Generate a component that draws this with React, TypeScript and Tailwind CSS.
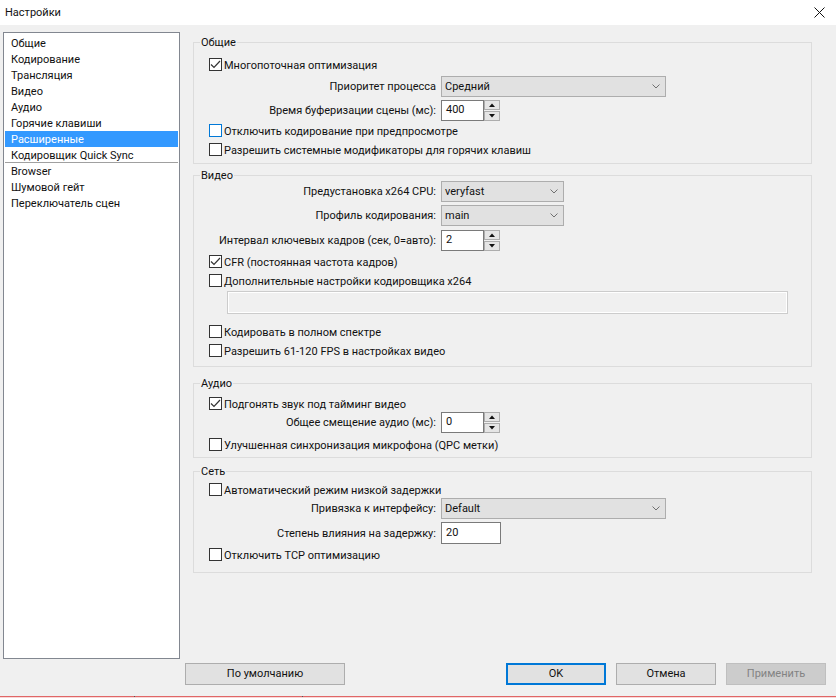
import React from "react";

const font = { fontFamily: 'Roboto, "Noto Sans", "Liberation Sans", sans-serif' };

function Box({ checked, hover }: { checked?: boolean; hover?: boolean }) {
  return (
    <span
      className={`w-[13px] h-[13px] shrink-0 bg-white border flex items-center justify-center ${
        hover ? "border-[#0078d7]" : "border-[#333333]"
      }`}
    >
      {checked && (
        <svg width="11" height="11" viewBox="0 0 11 11">
          <polyline points="1,5.5 4,8.5 10,2" fill="none" stroke="#333" strokeWidth="1.2" />
        </svg>
      )}
    </span>
  );
}

function Check({ label, checked, hover, h = "h-[19px]", mt = "" }: { label: string; checked?: boolean; hover?: boolean; h?: string; mt?: string }) {
  return (
    <div className={`flex items-center pl-[15px] ${h} ${mt}`}>
      <Box checked={checked} hover={hover} />
      <span className="ml-[2px] pt-[2px] leading-none">{label}</span>
    </div>
  );
}

function Row({ label, children, h = "h-[21px]", mt = "" }: { label: string; children: React.ReactNode; h?: string; mt?: string }) {
  return (
    <div className={`flex items-center ${h} ${mt}`}>
      <div className="w-[247px] text-right pr-[5px] pt-[2px]">{label}</div>
      {children}
    </div>
  );
}

function Combo({ value, w }: { value: string; w: string }) {
  return (
    <div className={`${w} h-full bg-[#e1e1e1] border border-[#adadad] flex items-center justify-between pl-[3px] pr-[5px]`}>
      <span className="pt-[1px]">{value}</span>
      <svg width="8" height="5" viewBox="0 0 8 5">
        <polyline points="0.5,0.5 4,4 7.5,0.5" fill="none" stroke="#707070" strokeWidth="1" />
      </svg>
    </div>
  );
}

function Spin({ value }: { value: string }) {
  return (
    <div className="flex h-full">
      <div className="w-[43px] h-full bg-white border border-[#7a7a7a] pl-[4px] leading-[17px]">{value}</div>
      <div className="w-[16px] h-full flex flex-col gap-[1px]">
        {[0, 1].map((i) => (
          <div key={i} className="flex-1 bg-[#e5e5e5] border border-[#adadad] flex items-center justify-center">
            <svg width="6" height="4" viewBox="0 0 6 4">
              <polygon points={i === 0 ? "0,4 3,0.5 6,4" : "0,0 3,3.5 6,0"} fill="#111" />
            </svg>
          </div>
        ))}
      </div>
    </div>
  );
}

function Group({ title, h, mt, children }: { title: string; h: string; mt: string; children: React.ReactNode }) {
  return (
    <div className={`relative ml-[8px] w-[619px] border border-[#dcdcdc] ${h} ${mt}`}>
      <span className="absolute top-[-8px] left-[6px] px-[1px] leading-[16px] bg-[#f0f0f0]">{title}</span>
      {children}
    </div>
  );
}

function Btn({ label, kind }: { label: string; kind?: "default" | "disabled" }) {
  const cls =
    kind === "default"
      ? "border-2 border-[#0078d7] bg-[#e1e1e1]"
      : kind === "disabled"
      ? "border border-[#bfbfbf] bg-[#cccccc] text-[#838383]"
      : "border border-[#adadad] bg-[#e1e1e1]";
  return <div className={`h-[22px] flex items-center justify-center pt-[1px] ${cls}`}>{label}</div>;
}

const items = [
  "Общие",
  "Кодирование",
  "Трансляция",
  "Видео",
  "Аудио",
  "Горячие клавиши",
  "Расширенные",
  "Кодировщик Quick Sync",
];
const items2 = ["Browser", "Шумовой гейт", "Переключатель сцен"];

export default function App() {
  return (
    <div className="w-[836px] h-[698px] bg-[#f0f0f0] text-[11px] text-[#111] flex flex-col overflow-hidden" style={font}>
      <div className="h-[25px] bg-white flex items-center justify-between pl-[5px] pr-[11px]">
        <span className="pt-[1px]">Настройки</span>
        <svg width="11" height="11" viewBox="0 0 11 11">
          <path d="M0.5 0.5 L10.5 10.5 M10.5 0.5 L0.5 10.5" stroke="#111" strokeWidth="1" />
        </svg>
      </div>

      <div className="h-[671px] flex pt-[7px] pl-[3px]">
        <div className="w-[177px] h-[627px] bg-white border border-[#828790] pt-[2px] px-[1px] shrink-0">
          {items.map((t, i) => (
            <div
              key={t}
              className={`${i === 7 ? "h-[15px]" : "h-[16px]"} leading-[17px] pl-[6px] ${
                i === 6 ? "bg-[#3399ff] text-white" : ""
              }`}
            >
              {t}
            </div>
          ))}
          <div className="h-[1px] bg-[#a0a0a0]" />
          {items2.map((t) => (
            <div key={t} className="h-[16px] leading-[17px] pl-[6px]">
              {t}
            </div>
          ))}
        </div>

        <div className="ml-[5px] w-[641px] flex flex-col pt-[10px] pb-[11px]">
          <Group title="Общие" h="h-[122px]" mt="">
            <Check label="Многопоточная оптимизация" checked mt="mt-[12px]" />
            <Row label="Приоритет процесса" mt="mt-[2px]">
              <Combo value="Средний" w="w-[225px]" />
            </Row>
            <Row label="Время буферизации сцены (мс):" mt="mt-[3px]">
              <Spin value="400" />
            </Row>
            <Check label="Отключить кодирование при предпросмотре" hover />
            <Check label="Разрешить системные модификаторы для горячих клавиш" />
          </Group>

          <Group title="Видео" h="h-[192px]" mt="mt-[11px]">
            <Row label="Предустановка x264 CPU:" mt="mt-[5px]">
              <Combo value="veryfast" w="w-[123px]" />
            </Row>
            <Row label="Профиль кодирования:" mt="mt-[3px]">
              <Combo value="main" w="w-[123px]" />
            </Row>
            <Row label="Интервал ключевых кадров (сек, 0=авто):" mt="mt-[4px]">
              <Spin value="2" />
            </Row>
            <Check label="CFR (постоянная частота кадров)" checked mt="mt-[1px]" />
            <Check label="Дополнительные настройки кодировщика x264" />
            <div className="ml-[33px] mt-[1px] w-[561px] h-[23px] border border-[#cccccc] shadow-[inset_0_0_0_1px_#ffffff]" />
            <Check label="Кодировать в полном спектре" mt="mt-[8px]" />
            <Check label="Разрешить 61-120 FPS в настройках видео" />
          </Group>

          <Group title="Аудио" h="h-[75px]" mt="mt-[16px]">
            <Check label="Подгонять звук под тайминг видео" checked h="h-[18px]" mt="mt-[10px]" />
            <Row label="Общее смещение аудио (мс):">
              <Spin value="0" />
            </Row>
            <Check label="Улучшенная синхронизация микрофона (QPC метки)" mt="mt-[2px]" />
          </Group>

          <Group title="Сеть" h="h-[102px]" mt="mt-[13px]">
            <Check label="Автоматический режим низкой задержки" h="h-[18px]" mt="mt-[8px]" />
            <Row label="Привязка к интерфейсу:">
              <Combo value="Default" w="w-[225px]" />
            </Row>
            <Row label="Степень влияния на задержку:" h="h-[22px]" mt="mt-[3px]">
              <div className="w-[60px] h-full bg-white border border-[#7a7a7a] pl-[4px] pt-[1px] flex items-center">20</div>
            </Row>
            <Check label="Отключить TCP оптимизацию" mt="mt-[1px]" />
          </Group>

          <div className="mt-auto flex justify-between">
            <div className="w-[160px]">
              <Btn label="По умолчанию" />
            </div>
            <div className="flex gap-[10px]">
              <div className="w-[100px]">
                <Btn label="OK" kind="default" />
              </div>
              <div className="w-[100px]">
                <Btn label="Отмена" />
              </div>
              <div className="w-[100px]">
                <Btn label="Применить" kind="disabled" />
              </div>
            </div>
          </div>
        </div>
      </div>

      <div className="h-[1px] bg-[#e06666] flex">
        <div className="ml-[134px] w-[1px] bg-[#555]" />
        <div className="ml-[167px] w-[1px] bg-[#555]" />
      </div>
      <div className="h-[1px] bg-[#f8d7d7]" />
    </div>
  );
}
